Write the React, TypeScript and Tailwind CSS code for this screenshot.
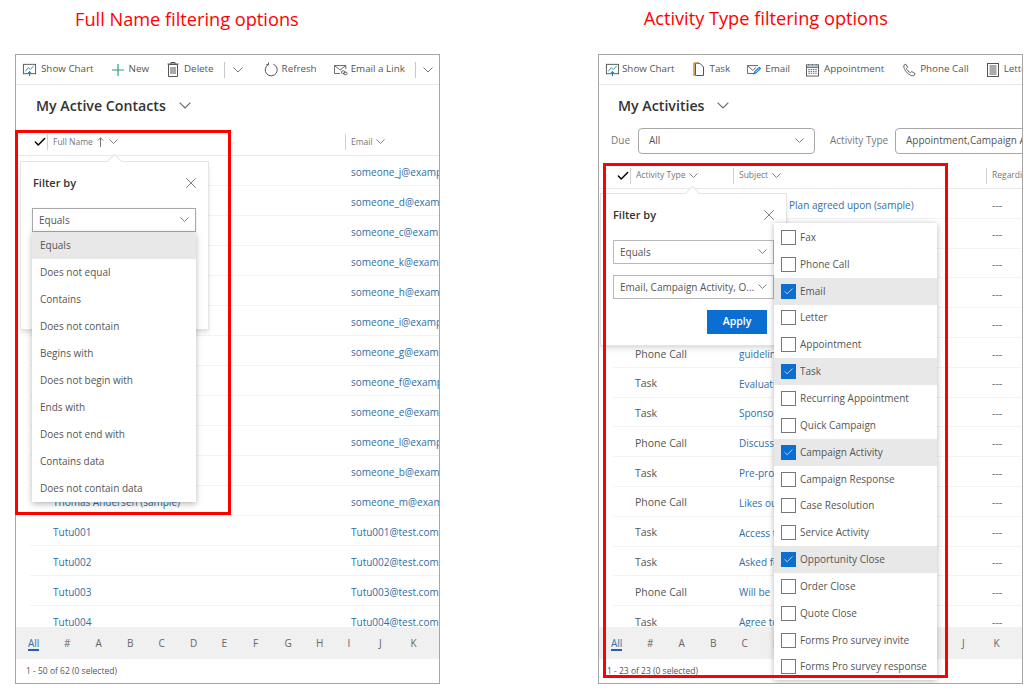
import { ReactNode } from 'react';
import { Check, X } from 'lucide-react';

const ChartIcon = () => (
  <svg width="15" height="15" viewBox="0 0 16 16" fill="none" stroke="#555" strokeWidth="1">
    <rect x="1.5" y="2.5" width="13" height="10" />
    <path d="M3.5 10l3-4 2.500 2 3.500-4" stroke="#2f9e8f" />
    <path d="M8 15v-5M6 12l2-2 2 2" stroke="#1f6fb5" />
  </svg>
);
const PlusIcon = () => (
  <svg width="14" height="14" viewBox="0 0 14 14" fill="none" stroke="#2f9e7f" strokeWidth="1.2">
    <path d="M7 1v12M1 7h12" />
  </svg>
);
const TrashIcon = () => (
  <svg width="12" height="15" viewBox="0 0 12 15" fill="none" stroke="#555" strokeWidth="1">
    <path d="M.5 2h11M4 2V.5h4V2M1.500 2.500h9v12h-9zM4 5v7M6 5v7M8 5v7" />
  </svg>
);
const RefreshIcon = () => (
  <svg width="14" height="15" viewBox="0 0 14 15" fill="none" stroke="#555" strokeWidth="1">
    <path d="M4.500 2.500a6 6 0 1 0 4.800-.3M4.500.5v2.200H2.300" />
  </svg>
);
const MailLinkIcon = () => (
  <svg width="14" height="13" viewBox="0 0 16 14" fill="none" stroke="#555" strokeWidth="1">
    <path d="M7 11.500H.5v-9h13v4M.5 2.500l6.500 5 6.500-5" />
    <rect x="8.500" y="8.500" width="4" height="3" rx="1.500" />
    <rect x="11" y="10" width="4" height="3" rx="1.500" />
  </svg>
);
const TaskIcon = () => (
  <svg width="12" height="15" viewBox="0 0 12 15" fill="none">
    <path d="M2.500 1.500v12h8V5l-3.500-3.500z" stroke="#555" />
    <path d="M1 1h5M1 1v12h1.500" stroke="#c98a3a" strokeWidth="1.500" />
  </svg>
);
const EmailIcon = () => (
  <svg width="14" height="13" viewBox="0 0 16 14" fill="none" stroke="#555" strokeWidth="1">
    <path d="M8 11.500H.5v-9h12M.5 2.500L6.500 8l4-3.500" />
    <path d="M8 12l1-2.500 5-5 1.300 1.300-5 5z" stroke="#1f7fd0" strokeWidth="1.300" />
  </svg>
);
const CalendarIcon = () => (
  <svg width="13" height="14" viewBox="0 0 14 14" fill="none" stroke="#555" strokeWidth="1">
    <rect x="0.500" y="1.500" width="13" height="12" />
    <path d="M0.500 4h13" stroke="#1f6fb5" strokeWidth="1.300" />
    <path d="M3 .5v2M7 .5v2M11 .5v2M2.500 6.500h9M2.500 8.500h9M2.500 10.500h9" strokeDasharray="1.500 1" />
  </svg>
);
const PhoneIcon = () => (
  <svg width="13" height="14" viewBox="0 0 14 14" fill="none" stroke="#555" strokeWidth="1">
    <path d="M1 1.800L3 .7l2 3.300-1.300 1.300c.6 1.600 2.400 3.800 4.300 4.600L9.500 8.600l3.500 2.400-1 1.800c-1 .9-3.500.5-6-1.500C2.500 8.800.2 4.200 1 1.800z" />
  </svg>
);
const LetterIcon = () => (
  <svg width="12" height="14" viewBox="0 0 12 14" fill="none" stroke="#555" strokeWidth="1">
    <rect x="0.500" y="0.500" width="11" height="13" />
    <path d="M2.500 3h7M2.500 5h7M2.500 7h7M2.500 9h7M2.500 11h7" />
  </svg>
);
const UpArrow = () => (
  <svg width="7" height="10" viewBox="0 0 7 10" fill="none" stroke="#777" strokeWidth="1" className="ml-[4px] shrink-0">
    <path d="M3.500 10V.8M.8 3.500l2.700-2.700 2.700 2.700" />
  </svg>
);
const Caret = ({ w = 9, className = '' }: { w?: number; className?: string }) => (
  <svg width={w} height={w * 0.6} viewBox="0 0 10 6" fill="none" stroke="#666" strokeWidth="0.9" className={`shrink-0 ${className}`}>
    <path d="M.5.5 5 5 9.500.5" />
  </svg>
);
const Divider = ({ className }: { className: string }) => <div className={`h-4 w-px shrink-0 bg-[#c8c8c8] ${className}`} />;

function Tool({ icon, label, className, gap = 'gap-[4px]' }: { icon: ReactNode; label: string; className: string; gap?: string }) {
  return (
    <div className={`flex shrink-0 items-center whitespace-nowrap ${gap} ${className}`}>
      {icon}
      <span>{label}</span>
    </div>
  );
}

const contactEmails = ['someone_j@example.com', 'someone_d@example.com', 'someone_c@example.com', 'someone_k@example.com', 'someone_h@example.com', 'someone_i@example.com', 'someone_g@example.com', 'someone_f@example.com', 'someone_e@example.com', 'someone_l@example.com', 'someone_b@example.com', 'someone_m@example.com', 'Tutu001@test.com', 'Tutu002@test.com', 'Tutu003@test.com', 'Tutu004@test.com'];
const contactNames: Record<number, string> = { 11: 'Thomas Andersen (sample)', 12: 'Tutu001', 13: 'Tutu002', 14: 'Tutu003', 15: 'Tutu004' };
const operators = ['Equals', 'Does not equal', 'Contains', 'Does not contain', 'Begins with', 'Does not begin with', 'Ends with', 'Does not end with', 'Contains data', 'Does not contain data'];
const activityRows: [string, string][] = [
  ['', 'Follow up: Plan agreed upon (sample)'], ['', ''], ['', ''], ['', ''], ['', ''],
  ['Phone Call', 'guidelines sent for new launch (sample)'],
  ['Task', 'Evaluation'], ['Task', 'Sponsorship'], ['Phone Call', 'Discuss'], ['Task', 'Pre-process'],
  ['Phone Call', 'Likes our'], ['Task', 'Access to'], ['Task', 'Asked for'], ['Phone Call', 'Will be'], ['Task', 'Agree to'],
];
const activityTypes = ['Fax', 'Phone Call', 'Email', 'Letter', 'Appointment', 'Task', 'Recurring Appointment', 'Quick Campaign', 'Campaign Activity', 'Campaign Response', 'Case Resolution', 'Service Activity', 'Opportunity Close', 'Order Close', 'Quote Close', 'Forms Pro survey invite', 'Forms Pro survey response'];
const checkedTypes = ['Email', 'Task', 'Campaign Activity', 'Opportunity Close'];
const jumpLetters = ['#', 'A', 'B', 'C', 'D', 'E', 'F', 'G', 'H', 'I', 'J', 'K'];

function JumpBar() {
  return (
    <div className="flex h-8 shrink-0 items-center bg-[#f0f0f0] pl-3 text-[10px] text-[#666]">
      <span className="w-[31px] text-[#3a6ea5]">
        <span className="inline-block border-b-2 border-[#2b5fa8] leading-[12px]">All</span>
      </span>
      {jumpLetters.map((l) => (
        <span key={l} className="w-[31.500px] pl-[5px]">{l}</span>
      ))}
    </div>
  );
}

function FilterHead() {
  return (
    <div className="relative flex items-center justify-between">
      <span className="text-[11px] font-semibold text-[#333]">Filter by</span>
      <X size={18} strokeWidth={0.9} className="-mr-[4px] text-[#444]" />
    </div>
  );
}

function Notch({ className }: { className: string }) {
  return <div className={`absolute -top-[6px] h-[11px] w-[11px] rotate-45 border-l border-t border-[#e4e4e4] bg-white ${className}`} />;
}

export default function App() {
  return (
    <div className="relative h-[693px] w-[1024px] overflow-hidden bg-white font-['Open_Sans','Noto_Sans',sans-serif] text-[10px] text-[#555]">
      <div className="flex h-[54px]">
        <h2 className="ml-[75px] mt-[7px] h-fit whitespace-nowrap text-[18.200px] leading-6 text-[#ff0000]">Full Name filtering options</h2>
        <h2 className="ml-[345px] mt-[6px] h-fit whitespace-nowrap text-[18.200px] leading-6 text-[#ff0000]">Activity Type filtering options</h2>
      </div>
      <div className="flex gap-[158px] pl-[15px]">
        {/* contacts grid */}
        <section className="relative flex h-[630px] w-[425px] flex-col overflow-hidden border border-[#a6a6a6]">
          <div className="flex h-[30px] shrink-0 items-center overflow-hidden border-b border-[#e8e8e8] text-[9.800px]">
            <Tool className="ml-[6px]" icon={<ChartIcon />} label="Show Chart" />
            <Tool className="ml-[17px]" icon={<PlusIcon />} label="New" />
            <Tool className="ml-[18px]" gap="gap-[5px]" icon={<TrashIcon />} label="Delete" />
            <Divider className="ml-[10px]" />
            <Caret w={10} className="ml-[8px]" />
            <Tool className="ml-[21px]" icon={<RefreshIcon />} label="Refresh" />
            <Tool className="ml-[17px]" gap="gap-[3px]" icon={<MailLinkIcon />} label="Email a Link" />
            <Divider className="ml-[10px]" />
            <Caret w={10} className="ml-[7px]" />
          </div>
          <div className="flex h-[43px] shrink-0 items-center gap-[13px] pb-[1px] pl-[20px] text-[14.200px] font-semibold text-[#333]">
            My Active Contacts <Caret w={12} />
          </div>
          <div className="flex h-[28px] shrink-0 items-center border-b border-[#e8e8e8] pt-[1px] text-[8.500px] text-[#777]">
            <Check size={14} strokeWidth={2.500} className="ml-[17px] shrink-0 text-black" />
            <div className="flex h-4 w-[298px] shrink-0 items-center border-l border-[#d0d0d0] pl-[5px]">
              Full Name <UpArrow /> <Caret w={9} className="ml-[5px]" />
            </div>
            <div className="flex h-4 items-center gap-[3px] border-l border-[#d0d0d0] pl-[5px]">Email <Caret w={9} /></div>
          </div>
          <div className="min-h-0 flex-1 overflow-hidden">
            {contactEmails.map((email, i) => (
              <div key={email} className="ml-[14px] flex h-[30px] items-center whitespace-nowrap border-b border-[#f3f3f3] pt-[3px] text-[10px] text-[#2f6ea5]">
                <span className="ml-[23px] w-[298px] shrink-0">{contactNames[i] ?? ''}</span>
                <span>{email}</span>
              </div>
            ))}
          </div>
          <JumpBar />
          <div className="flex h-[24px] shrink-0 items-center pl-[10px] text-[8.500px] text-[#555]">1 - 50 of 62 (0 selected)</div>

          <div className="absolute left-[4px] top-[106px] h-[169px] w-[189px] border border-[#e4e4e4] bg-white p-[12px] shadow-md">
            <Notch className="left-[88px]" />
            <FilterHead />
          </div>
          <div className="absolute left-[16px] top-[153px] w-[164px]">
            <div className="flex h-[24px] items-center justify-between border border-[#a8a8a8] px-[6px] text-[10px] shadow-sm">Equals <Caret w={9} /></div>
            <div className="bg-white shadow-[0_2px_6px_rgba(0,0,0,0.28)]">
              {operators.map((op, i) => (
                <div key={op} className={`flex h-[27px] items-center pl-[8px] text-[10px] text-[#555] ${i === 0 ? 'bg-[#e8e8e8]' : ''}`}>{op}</div>
              ))}
            </div>
          </div>
        </section>

        {/* activities grid */}
        <section className="relative flex h-[630px] w-[425px] flex-col overflow-hidden border border-[#a6a6a6]">
          <div className="flex h-[30px] shrink-0 items-center overflow-hidden border-b border-[#e8e8e8] text-[9.800px]">
            <Tool className="ml-[6px]" gap="gap-[2px]" icon={<ChartIcon />} label="Show Chart" />
            <Tool className="ml-[18px]" gap="gap-[5px]" icon={<TaskIcon />} label="Task" />
            <Tool className="ml-[17px]" icon={<EmailIcon />} label="Email" />
            <Tool className="ml-[16px]" gap="gap-[5px]" icon={<CalendarIcon />} label="Appointment" />
            <Tool className="ml-[19px]" gap="gap-[4px]" icon={<PhoneIcon />} label="Phone Call" />
            <Tool className="ml-[18px]" gap="gap-[5px]" icon={<LetterIcon />} label="Letter" />
          </div>
          <div className="flex h-[43px] shrink-0 items-center gap-[12px] pb-[2px] pl-[19px] text-[14.200px] font-semibold text-[#333]">
            My Activities <Caret w={12} />
          </div>
          <div className="flex h-[25px] shrink-0 items-center whitespace-nowrap text-[10px]">
            <span className="ml-[12px] w-[27px] shrink-0 text-[#777]">Due</span>
            <div className="flex h-[26px] w-[177px] shrink-0 items-center justify-between rounded-sm border border-[#a8a8a8] px-[10px]">All <Caret w={9} /></div>
            <span className="ml-[15px] w-[65px] shrink-0 text-[#777]">Activity Type</span>
            <div className="flex h-[26px] w-[150px] shrink-0 items-center rounded-sm border border-[#a8a8a8] pl-[10px]">Appointment,Campaign Activity</div>
          </div>
          <div className="mt-[10px] flex h-[26px] shrink-0 items-center whitespace-nowrap border-b border-[#e8e8e8] text-[8.500px] text-[#777]">
            <Check size={14} strokeWidth={2.500} className="ml-[17px] shrink-0 text-black" />
            <div className="flex h-4 w-[103px] shrink-0 items-center gap-[4px] border-l border-[#d0d0d0] pl-[5px]">Activity Type <Caret w={9} /></div>
            <div className="flex h-4 w-[253px] shrink-0 items-center gap-[4px] border-l border-[#d0d0d0] pl-[5px]">Subject <Caret w={9} /></div>
            <div className="flex h-4 items-center border-l border-[#d0d0d0] pl-[5px]">Regarding</div>
          </div>
          <div className="min-h-0 flex-1 overflow-hidden">
            {activityRows.map(([type, subject], i) => (
              <div key={i} className="ml-[14px] flex h-[29.800px] items-center whitespace-nowrap border-b border-[#f3f3f3] pt-[4px]">
                <span className="ml-[22px] w-[104px] shrink-0 text-[10.500px]">{type}</span>
                <span className="w-[253px] shrink-0 text-[10px] text-[#2f6ea5]">{subject}</span>
                <span className="text-[10.500px] text-[#666]">---</span>
              </div>
            ))}
          </div>
          <JumpBar />
          <div className="flex h-[24px] shrink-0 items-center pl-[8px] text-[8.500px] text-[#555]">1 - 23 of 23 (0 selected)</div>

          <div className="absolute left-[1px] top-[138px] h-[153px] w-[187px] border border-[#e4e4e4] bg-white px-[12px] pt-[12px] shadow-md">
            <Notch className="left-[86px]" />
            <FilterHead />
            <div className="mt-[16px] flex h-[24px] items-center justify-between border border-[#b8b8b8] px-[6px]">Equals <Caret w={9} /></div>
            <div className="mt-[11px] flex h-[24px] items-center justify-between whitespace-nowrap border border-[#b8b8b8] px-[6px]">Email, Campaign Activity, O... <Caret w={9} /></div>
            <div className="mt-[11px] flex justify-end pr-[7px]">
              <div className="flex h-[24px] w-[60px] items-center justify-center bg-[#0b6fd2] text-[10.500px] font-semibold text-white">Apply</div>
            </div>
          </div>
          <div className="absolute left-[175px] top-[168px] w-[163px] bg-white pt-[1px] shadow-[0_1px_6px_rgba(0,0,0,0.28)]">
            {activityTypes.map((t) => {
              const on = checkedTypes.includes(t);
              return (
                <div key={t} className={`flex h-[26.850px] items-center gap-[4px] pl-[7px] text-[10px] ${on ? 'bg-[#e8e8e8]' : ''}`}>
                  <span className={`flex h-[15px] w-[15px] items-center justify-center border ${on ? 'border-[#0b6fd2] bg-[#0b6fd2]' : 'border-[#777] bg-white'}`}>
                    {on && <Check size={11} strokeWidth={1.5} className="text-white" />}
                  </span>
                  {t}
                </div>
              );
            })}
          </div>
        </section>
      </div>

      <div className="absolute left-[15px] top-[130px] h-[385px] w-[216px] border-[3px] border-[#ff0000]" />
      <div className="absolute left-[603px] top-[163px] h-[515px] w-[345px] border-[3px] border-[#ff0000]" />
    </div>
  );
}
